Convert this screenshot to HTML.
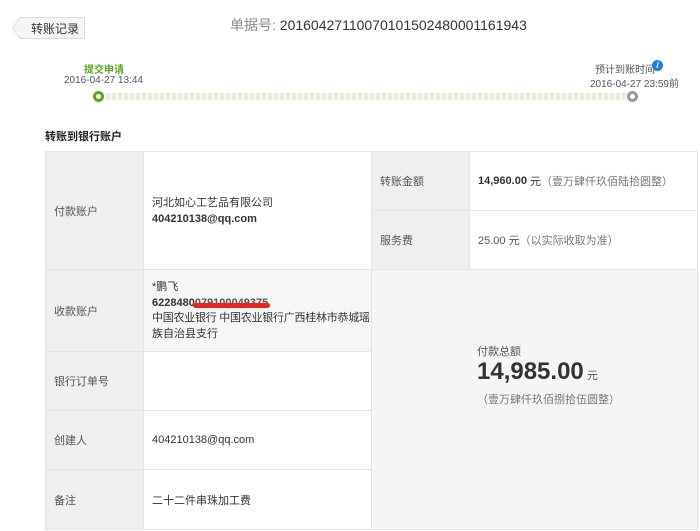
<!DOCTYPE html>
<html><head><meta charset="utf-8"><style>
*{margin:0;padding:0;box-sizing:border-box}
body{width:700px;height:531px;background:#fff;position:relative;overflow:hidden;font-family:"Liberation Sans","Noto Sans CJK SC",sans-serif;color:#333;font-size:11px}
.a{position:absolute}
.c{position:absolute;border-right:1px solid #e4e4e4;border-bottom:1px solid #e4e4e4}
.l{background:#efefef;padding-left:8px;display:flex;align-items:center;color:#555}
.v{background:#fff;padding-left:8px;display:flex;align-items:center}
b{font-weight:bold}
</style></head><body>
<svg class="a" style="left:12px;top:17px" width="73" height="22"><polygon points="8,0.5 72.5,0.5 72.5,21.5 8,21.5 0.5,11" fill="#f5f5f5" stroke="#ddd"/></svg>
<div class="a" style="left:31px;top:20px;font-size:12px;color:#333">转账记录</div>
<div class="a" style="left:230px;top:15px;font-size:14px;color:#333"><span style="color:#888">单据号: </span>20160427110070101502480001161943</div>

<div class="a" style="left:84px;top:61px;color:#5aa51b;font-size:10px;font-weight:bold">提交申请</div>
<div class="a" style="left:64px;top:75px;color:#555;font-size:10px">2016-04-27 13:44</div>
<div class="a" style="left:595px;top:61px;color:#555;font-size:10px">预计到账时间</div>
<div class="a" style="left:652px;top:60px;width:11px;height:11px;border-radius:50%;background:#1a7fe0;color:#fff;font-size:9px;font-weight:bold;font-style:italic;text-align:center;line-height:11px">i</div>
<div class="a" style="left:590px;top:75px;color:#555;font-size:10px">2016-04-27 23:59前</div>
<div class="a" style="left:100px;top:93px;width:530px;height:7px;background:repeating-linear-gradient(90deg,#e9ecd9 0 4px,#f6f7ee 4px 6px);border-radius:3px"></div>
<div class="a" style="left:93px;top:91px;width:11px;height:11px;border-radius:50%;border:3px solid #5aa51b;background:#fff"></div>
<div class="a" style="left:627px;top:91px;width:11px;height:11px;border-radius:50%;border:3px solid #999;background:#fff"></div>

<div class="a" style="left:45px;top:128px;font-size:11px;font-weight:bold;color:#222">转账到银行账户</div>

<div class="a" style="left:45px;top:151px;width:653px;height:379px;border-top:1px solid #e4e4e4;border-left:1px solid #e4e4e4"></div>
<div class="c l" style="left:46px;top:152px;width:98px;height:118px">付款账户</div>
<div class="c v" style="left:144px;top:152px;width:228px;height:118px;flex-direction:column;align-items:flex-start;justify-content:center;line-height:16px">河北如心工艺品有限公司<b>404210138@qq.com</b></div>
<div class="c l" style="left:372px;top:152px;width:98px;height:59px">转账金额</div>
<div class="c v" style="left:470px;top:152px;width:228px;height:59px"><b>14,960.00</b>&nbsp;元 <span style="color:#777">（壹万肆仟玖佰陆拾圆整）</span></div>
<div class="c l" style="left:372px;top:211px;width:98px;height:59px">服务费</div>
<div class="c v" style="left:470px;top:211px;width:228px;height:59px;color:#555">25.00 元 <span style="color:#777">（以实际收取为准）</span></div>

<div class="c l" style="left:46px;top:270px;width:98px;height:82px">收款账户</div>
<div class="c v" style="left:144px;top:270px;width:228px;height:82px;background:#f6f6f6;display:block;padding-top:10px;line-height:15.5px;white-space:nowrap">*鹏飞<br><b>6228480<span style="position:relative;color:#555">079100049375<span style="position:absolute;left:-2px;right:-2px;top:6px;height:5px;background:#e8261f;border-radius:3px"></span></span></b><br><span style="letter-spacing:-0.25px">中国农业银行 中国农业银行广西桂林市恭城瑶</span><br>族自治县支行</div>
<div class="c" style="left:372px;top:270px;width:326px;height:260px;background:#f5f5f5"></div>
<div class="a" style="left:477px;top:343px;color:#555">付款总额</div>
<div class="a" style="left:477px;top:358px;font-size:24px;font-weight:bold;color:#333">14,985.00<span style="font-size:11px;font-weight:normal;color:#555"> 元</span></div>
<div class="a" style="left:477px;top:391px;color:#777">（壹万肆仟玖佰捌拾伍圆整）</div>

<div class="c l" style="left:46px;top:352px;width:98px;height:59px">银行订单号</div>
<div class="c v" style="left:144px;top:352px;width:228px;height:59px"></div>
<div class="c l" style="left:46px;top:411px;width:98px;height:59px">创建人</div>
<div class="c v" style="left:144px;top:411px;width:228px;height:59px">404210138@qq.com</div>
<div class="c l" style="left:46px;top:470px;width:98px;height:60px">备注</div>
<div class="c v" style="left:144px;top:470px;width:228px;height:60px">二十二件串珠加工费</div>
</body></html>
